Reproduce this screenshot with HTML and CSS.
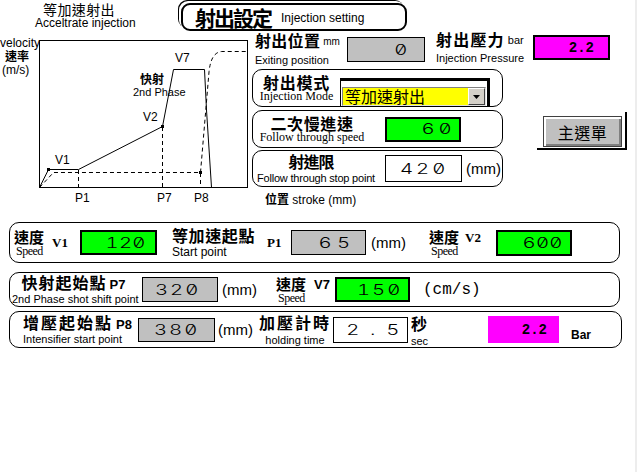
FILE: index.html
```html
<!DOCTYPE html>
<html lang="zh-Hant">
<head>
<meta charset="utf-8">
<title>射出設定</title>
<link rel="stylesheet" href="styles.css">
</head>
<body>
<div class="page">
  <header class="header">
    <div class="hdr-left">
      <div class="hdr-cn">等加速射出</div>
      <div class="hdr-en">Acceltrate injection</div>
    </div>
    <div class="title-box">
      <span class="title-cn">射出設定</span>
      <span class="title-en">Injection setting</span>
    </div>
  </header>

  <section class="main">
    <svg class="graph" width="250" height="191" viewBox="0 31 250 191">
      <text class="g-t" x="0" y="47">velocity</text>
      <text class="g-cn" x="5" y="61">速率</text>
      <text class="g-t" x="2" y="74">(m/s)</text>
      <rect x="39.5" y="40.5" width="208" height="147" fill="none" stroke="#000"/>
      <polyline points="39.5,187.5 48.5,169.5 78.5,169.5 162.5,126.5 173.5,69.5 204.5,69.5 206.5,110 211.5,187.5" fill="none" stroke="#000"/>
      <path d="M39.5 187.5 L53.5 172.5 L200.5 172.5 M200.5 172.5 L209 72 Q211 52 222 51.5 L247 51.5 M78.5 170 V187.5 M162.5 127 V187.5 M200.5 173 V187.5" fill="none" stroke="#000" stroke-dasharray="4 3"/>
      <rect x="47" y="168" width="3" height="3"/>
      <rect x="161" y="125" width="3" height="3"/>
      <rect x="199" y="171" width="3" height="3"/>
      <text class="g-t" x="175" y="62">V7</text>
      <text class="g-cn" x="140" y="84">快射</text>
      <text class="g-s" x="133" y="96">2nd Phase</text>
      <text class="g-t" x="143" y="121">V2</text>
      <text class="g-t" x="55" y="164">V1</text>
      <text class="g-t" x="75" y="202">P1</text>
      <text class="g-t" x="157" y="202">P7</text>
      <text class="g-t" x="194" y="202">P8</text>
    </svg>

    <div class="right">
      <div class="info">
        <div class="pos-lbl">
          <div class="cn-b pos-cn">射出位置<span class="unit">mm</span></div>
          <div class="en-s">Exiting position</div>
        </div>
        <div class="field gray pos-val"><span class="num">0</span></div>
        <div class="press-lbl">
          <div class="cn-b press-cn">射出壓力<span class="unit unit-bar">bar</span></div>
          <div class="en-s">Injection Pressure</div>
        </div>
        <div class="field magenta press-val"><span class="mono">2.2</span></div>
      </div>

      <div class="mid">
        <div class="stack">
          <div class="pbox mode-box">
            <div class="mode-lbl">
              <div class="cn-b mode-cn">射出模式</div>
              <div class="serif-s">Injection Mode</div>
            </div>
            <div class="combo-frame">
              <div class="combo">
                <span class="combo-text">等加速射出</span>
                <span class="combo-btn"><svg width="7" height="4" viewBox="0 0 7 4"><path d="M0 0H7L3.5 4Z"/></svg></span>
              </div>
            </div>
          </div>
          <div class="pbox speed-box">
            <div class="fs-lbl">
              <div class="cn-b fs-cn">二次慢進速</div>
              <div class="serif-s">Follow through speed</div>
            </div>
            <div class="field green fs-val"><span class="num ls-w">60</span></div>
          </div>
          <div class="pbox stop-box">
            <div class="st-lbl">
              <div class="cn-b st-cn">射進限</div>
              <div class="en-s st-en">Follow through stop point</div>
            </div>
            <div class="field white st-val"><span class="num ls-m3">420</span></div>
            <div class="mm st-mm">(mm)</div>
          </div>
        </div>
        <div class="menu-wrap">
          <div class="menu-btn">主選單</div>
        </div>
      </div>

      <div class="stroke"><span class="stroke-cn">位置</span> stroke (mm)</div>
    </div>
  </section>

  <section class="rows">
    <div class="row row1">
      <div class="spd">
        <div class="spd-cn">速度</div>
        <div class="spd-en">Speed</div>
      </div>
      <div class="vl-serif">V1</div>
      <div class="field green r1-v1"><span class="num ls-t">120</span></div>
      <div class="r1-start">
        <div class="cn-b r1-start-cn">等加速起點</div>
        <div class="r1-start-en">Start point</div>
      </div>
      <div class="vl-serif p1">P1</div>
      <div class="field gray r1-p1"><span class="num ls-x">65</span></div>
      <div class="mm r1-mm">(mm)</div>
      <div class="spd">
        <div class="spd-cn">速度</div>
        <div class="spd-en">Speed</div>
      </div>
      <div class="vl-serif v2">V2</div>
      <div class="field green r1-v2"><span class="num ls-t">600</span></div>
    </div>

    <div class="row row2">
      <div class="r2-lbl">
        <div class="r2-line"><span class="cn-b r2-cn">快射起始點</span><span class="pl-sans">P7</span></div>
        <div class="en-s">2nd Phase shot shift point</div>
      </div>
      <div class="field gray r2-p7"><span class="num">320</span></div>
      <div class="mm r2-mm">(mm)</div>
      <div class="spd">
        <div class="spd-cn">速度</div>
        <div class="spd-en">Speed</div>
      </div>
      <div class="pl-sans v7">V7</div>
      <div class="field green r2-v7"><span class="num">150</span></div>
      <div class="cms">(cm/s)</div>
    </div>

    <div class="row row3">
      <div class="r3-lbl">
        <div class="r2-line"><span class="cn-b r3-cn">增壓起始點</span><span class="pl-sans">P8</span></div>
        <div class="en-s">Intensifier start point</div>
      </div>
      <div class="field gray r3-p8"><span class="num">380</span></div>
      <div class="mm r3-mm">(mm)</div>
      <div class="hold-lbl">
        <div class="cn-b hold-cn">加壓計時</div>
        <div class="en-s">holding time</div>
      </div>
      <div class="field white r3-hold"><span class="num ls-xx">2.5</span></div>
      <div class="sec-lbl">
        <div class="cn-b">秒</div>
        <div class="en-s">sec</div>
      </div>
      <div class="field magenta r3-bar"><span class="mono">2.2</span></div>
      <div class="bar-unit">Bar</div>
    </div>
  </section>
</div>
<div class="edge"></div>
</body>
</html>
```

FILE: styles.css
```css
*{box-sizing:border-box;margin:0;padding:0}
html,body{width:637px;height:472px;overflow:hidden;background:#fff}
body{display:flex;font-family:"Liberation Sans",Arial,sans-serif;color:#000}
.page{width:635px;height:472px;flex:none}
.edge{width:2px;height:472px;background:#ededed;flex:none}

/* header */
.header{display:flex;height:31px}
.hdr-left{width:181px;padding:2px 0 0 35px;flex:none}
.hdr-cn{font-family:"Noto Sans CJK TC","Noto Sans CJK SC",sans-serif;font-size:14px;line-height:15px;padding-left:8px;letter-spacing:0.4px;white-space:nowrap}
.hdr-en{font-size:12px;line-height:13px;white-space:nowrap}
.title-box{margin-top:3px;width:226px;height:28px;border:2px solid #000;border-radius:9px;box-shadow:-1px -1px 0 #fff,-2px -2px 0 #fff,-3px -3px 0 #000;display:flex;align-items:center;padding-left:12px;flex:none}
.title-cn{font-family:"Noto Sans CJK TC",sans-serif;font-weight:700;font-size:21px;line-height:22px;letter-spacing:-2px;white-space:nowrap}
.title-en{font-size:12px;margin-left:10px;padding-top:1px;white-space:nowrap}

/* main area */
.main{display:flex;height:191px}
.graph{display:block;flex:none}
.g-t{font-family:"Liberation Sans",sans-serif;font-size:12px}
.g-s{font-family:"Liberation Sans",sans-serif;font-size:11px}
.g-cn{font-family:"Noto Sans CJK TC",sans-serif;font-size:12px;font-weight:700}
.right{width:385px;flex:none}

.info{display:flex;align-items:flex-start;height:38px;padding-left:5px}
.pos-lbl{width:92px;padding-top:1px}
.press-lbl{width:97px;margin-left:11px}
.cn-b{font-family:"Noto Sans CJK TC","Noto Sans CJK SC",sans-serif;font-weight:700;font-size:16px;line-height:16px;white-space:nowrap}
.en-s{font-size:11px;line-height:12px;white-space:nowrap}
.pos-lbl .en-s,.press-lbl .en-s{margin-top:4px}
.pos-cn{letter-spacing:0.3px}
.press-cn{letter-spacing:1.2px}
.unit{font-family:"Liberation Sans",sans-serif;font-weight:400;font-size:10px;margin-left:3px;vertical-align:2px;letter-spacing:0}
.unit-bar{font-size:11px}
.serif-s{font-family:"Liberation Serif",serif;font-size:12px;line-height:13px;white-space:nowrap}
.mm{font-size:15px;line-height:17px;white-space:nowrap}

/* fields */
.field{display:flex;align-items:center;justify-content:flex-end;flex:none}
.gray{background:#c0c0c0;border:1px solid #000}
.green{background:#00ff00;border:2px solid #000}
.magenta{background:#ff00ff}
.white{background:#fff;border:1px solid #000}
.num{display:inline-block;font-family:Inter,sans-serif;font-weight:300;font-size:14px;line-height:14px;font-variant-numeric:tabular-nums slashed-zero;font-feature-settings:"tnum" 1,"zero" 1;transform:scaleX(1.45);transform-origin:100% 50%;--ls:1.4px;letter-spacing:var(--ls);margin-right:calc(-1 * var(--ls))}
.ls-t{--ls:0.2px}
.ls-w{--ls:2.7px}
.ls-m3{--ls:2.1px}
.ls-x{--ls:3.8px}
.ls-xx{--ls:7.4px}
.mono{font-family:"Liberation Mono",monospace;font-weight:700;font-size:14px;line-height:14px}

.pos-val{width:78px;height:25px;margin-top:6px;padding-right:16px}
.press-val{width:77px;height:25px;margin-top:4px;padding-right:14px;border:2px solid #000}

/* middle boxes */
.mid{display:flex}
.stack{margin-left:2px;width:251px;display:flex;flex-direction:column;flex:none}
.pbox{border:1px solid #000;border-radius:10px;display:flex;align-items:center;width:251px}
.mode-box{height:38px}
.speed-box{height:38px;margin-top:3px}
.stop-box{height:37px;margin-top:2px}

.mode-lbl{width:87px;text-align:center;flex:none}
.mode-cn{letter-spacing:0.8px}
.combo-frame{align-self:flex-end;width:150px;height:28px;border-top:3px solid #000;border-right:3px solid #000;border-left:1px solid #000;padding:6px 1px 0 1px;flex:none}
.combo{display:flex;height:19px;border:1px solid;border-color:#808080 #e0e0e0 #e0e0e0 #808080}
.combo-text{flex:1;background:#ffff00;font-family:"Noto Sans CJK TC",sans-serif;font-size:16px;line-height:17px;padding-left:2px;white-space:nowrap}
.combo-btn{width:17px;background:#d4d0c8;border:1px solid;border-color:#fff #404040 #404040 #fff;display:flex;align-items:center;justify-content:center}

.fs-lbl{width:118px;margin-right:14px;text-align:center;flex:none}
.fs-cn{letter-spacing:0.6px}
.fs-val{width:76px;height:25px;padding-right:6px}

.st-lbl{width:126px;margin-right:6px;text-align:center;flex:none}
.st-cn{padding-right:10px;letter-spacing:-1px}
.st-en{margin-top:3px;letter-spacing:-0.2px}
.st-val{width:77px;height:27px;padding-right:15px}
.st-mm{margin-left:4px}

.menu-wrap{margin-left:34px;margin-top:43px;width:90px;height:38px;border-right:2px solid #000;border-bottom:2px solid #000;padding:4px 3px 1px 6px;flex:none}
.menu-btn{width:79px;height:31px;background:#c0c0c0;border:1px solid #404040;box-shadow:inset 2px 2px #fff,inset -2px -2px #808080;display:flex;align-items:center;justify-content:center;font-family:"Noto Sans CJK TC",sans-serif;font-size:16px;letter-spacing:0.5px;padding-top:1px}

.stroke{margin:6px 0 0 15px;font-size:12px;line-height:12px;white-space:nowrap}
.stroke-cn{font-family:"Noto Sans CJK TC",sans-serif;font-weight:700;font-size:12px}

/* bottom rows */
.rows{padding-left:9px}
.row{border:1px solid #000;border-radius:10px;display:grid;align-items:center}
.row1{height:41px;width:611px;padding-left:4px;grid-template-columns:38px 28px 77px 108px 26px 75px 63px 35px 32px 76px}
.row2{height:35px;width:611px;margin-top:9px;padding-left:2px;grid-template-columns:130px 76px 58px 38px 21px 75px auto}
.row3{height:37px;width:613px;margin-top:4px;grid-template-columns:128px 77px 42px 76px 75px 80px 71px auto}

.spd{display:flex;flex-direction:column}
.spd-cn{font-family:"Noto Sans CJK TC",sans-serif;font-weight:700;font-size:15px;line-height:16px;letter-spacing:0;white-space:nowrap}
.spd-en{font-family:"Liberation Serif",serif;font-size:12px;line-height:11px;letter-spacing:-0.5px;padding-left:2px;margin-top:1px}
.vl-serif{font-family:"Liberation Serif",serif;font-weight:700;font-size:13px;line-height:14px}
.p1{padding-left:2px}
.v2{margin-bottom:10px;padding-left:1px}

.r1-v1{width:77px;height:25px;padding-right:9.5px}
.r1-start{padding-left:15px}
.r1-start-cn{letter-spacing:0.6px}
.r1-start-en{font-size:12px;line-height:13px;margin-top:3px;white-space:nowrap}
.r1-p1{width:75px;height:25px;padding-right:13px}
.r1-mm{padding-left:5px}
.r1-v2{width:76px;height:26px;padding-right:7.5px}

.r2-lbl{padding-right:7px;text-align:center}
.r2-line{white-space:nowrap}
.r2-cn{letter-spacing:1px}
.r3-cn{letter-spacing:2px}
.pl-sans{font-family:"Liberation Sans",sans-serif;font-weight:700;font-size:13px;margin-left:3px}
.r2-p7{width:76px;height:25px;padding-right:18px}
.r2-mm{padding-left:4px}
.v7{margin-left:0;margin-bottom:11px}
.r2-v7{width:75px;height:25px;padding-right:7px}
.cms{padding-left:13px;font-family:"Liberation Mono",monospace;font-size:16px;white-space:nowrap}

.r3-lbl{padding-left:13px}
.r3-p8{width:77px;height:24px;padding-right:16px}
.r3-mm{padding-left:3px}
.hold-lbl{text-align:center}
.hold-cn{letter-spacing:2px}
.hold-lbl .en-s{margin-top:4px}
.r3-hold{width:75px;height:26px;padding-right:4px}
.sec-lbl{padding-left:3px;align-self:start;margin-top:3px}
.sec-lbl .en-s{margin-top:4px}
.r3-bar{width:71px;height:27px;padding-right:12px}
.bar-unit{padding-left:12px;font-weight:700;font-size:12px;align-self:end;margin-bottom:5px}
```
